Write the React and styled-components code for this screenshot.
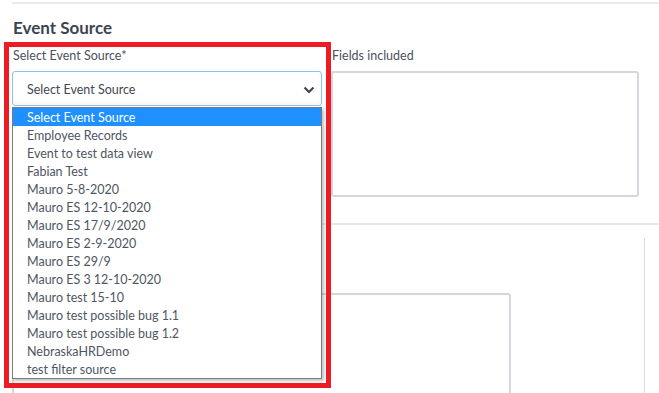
import React from 'react';
import styled, { createGlobalStyle } from 'styled-components';

const GlobalStyle = createGlobalStyle`
    body {
        margin: 0;
        background: #fff;
        font-family: Lato, "Open Sans", sans-serif;
        color: #4a525e;
    }
`

const Page = styled.div`
    position: relative;
    width: 659px;
    height: 393px;
    overflow: hidden;
    padding-left: 12px;
    box-sizing: border-box;
`

const TopRule = styled.div`
    margin-top: 2px;
    height: 2px;
    background: #e9eaec;
`

const Title = styled.h2`
    margin: 13px 0 0 1px;
    font-size: 17px;
    line-height: 22px;
    font-weight: 700;
    color: #3b4450;
`

const Row = styled.div`
    display: grid;
    grid-template-columns: 310px 308px;
    column-gap: 9px;
    margin-top: 9px;
`

const Field = styled.div`
    position: relative;
    display: flex;
    flex-direction: column;
`

const Label = styled.label`
    font-size: 12.5px;
    line-height: 16px;
    margin: 0 0 7px 1px;
    color: #4a525e;
`

const SelectBox = styled.div`
    height: 35px;
    box-sizing: border-box;
    border: 1px solid #8cc1f5;
    border-radius: 3px;
    display: flex;
    align-items: center;
    justify-content: space-between;
    padding: 2px 6px 0 14px;
    font-size: 12.5px;
    color: #3f4753;
    box-shadow: inset 0 -3px 4px rgba(0, 0, 0, 0.04);
`

const TextBox = styled.div`
    height: ${p => p.h}px;
    box-sizing: border-box;
    border: 2px solid #d4d7db;
    border-radius: 3px;
    background: #fff;
`

const Menu = styled.ul`
    position: absolute;
    top: 59px;
    left: 0;
    width: 310px;
    box-sizing: border-box;
    margin: 0;
    padding: 0;
    list-style: none;
    background: #fff;
    border: 1px solid #7a7a7a;
    box-shadow: 2px 2px 3px rgba(0, 0, 0, 0.25);
    z-index: 3;
`

const Option = styled.li`
    height: 18px;
    line-height: 19px;
    padding-left: 14px;
    font-size: 12.5px;
    color: ${p => (p.active ? '#fff' : '#4e5663')};
    background: ${p => (p.active ? '#1e90ff' : '#fff')};
`

const Divider = styled.div`
    margin-top: 26px;
    height: 2px;
    background: #e6e7e9;
`

const Card = styled.div`
    margin-top: 13px;
    margin-right: 14px;
    height: 160px;
    border-right: 1px solid #d8dce4;
    padding-top: 55px;
`

const Lower = styled.div`
    width: 499px;
`

const Highlight = styled.div`
    position: absolute;
    left: 4px;
    top: 42px;
    width: 327px;
    height: 346px;
    box-sizing: border-box;
    border: 5px solid #ed1c24;
    pointer-events: none;
    z-index: 4;
`

const options = [
    'Select Event Source',
    'Employee Records',
    'Event to test data view',
    'Fabian Test',
    'Mauro 5-8-2020',
    'Mauro ES 12-10-2020',
    'Mauro ES 17/9/2020',
    'Mauro ES 2-9-2020',
    'Mauro ES 29/9',
    'Mauro ES 3 12-10-2020',
    'Mauro test 15-10',
    'Mauro test possible bug 1.1',
    'Mauro test possible bug 1.2',
    'NebraskaHRDemo',
    'test filter source',
]

const Chevron = () => (
    <svg width="12" height="8" viewBox="0 0 12 8">
        <path d="M1.5 1.5 L6 6 L10.5 1.5" fill="none" stroke="#3f4753" strokeWidth="2.2" />
    </svg>
)

export default function App() {
    return (
        <Page>
            <GlobalStyle />
            <TopRule />
            <Title>Event Source</Title>
            <Row>
                <Field>
                    <Label>Select Event Source*</Label>
                    <SelectBox>
                        Select Event Source
                        <Chevron />
                    </SelectBox>
                    <Menu>
                        {options.map((o, i) => (
                            <Option key={o} active={i === 0}>{o}</Option>
                        ))}
                    </Menu>
                </Field>
                <Field>
                    <Label>Fields included</Label>
                    <TextBox h={126} />
                </Field>
            </Row>
            <Divider />
            <Card>
                <Lower>
                    <TextBox h={120} />
                </Lower>
            </Card>
            <Highlight />
        </Page>
    )
}
